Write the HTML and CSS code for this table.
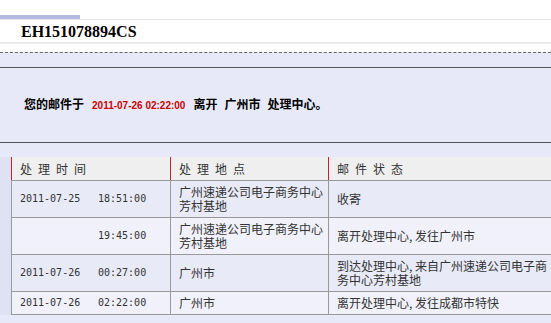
FILE: index.html
```html
<!DOCTYPE html>
<html lang="zh-CN">

<head>
    <meta charset="UTF-8">
    <meta name="viewport" content="width=device-width, initial-scale=1.0">
    <title>邮件跟踪查询</title>
    <link rel="stylesheet" href="styles.css">
</head>

<body>
    <div class="top-strip"></div>

    <div class="track-bar">EH151078894CS</div>

    <div class="result">
        <div class="notice">
            <p>您的邮件于<span class="notice-time">2011-07-26 02:22:00</span>离开<span class="notice-place">广州市</span>处理中心。</p>
        </div>

        <div class="table-wrap">
            <table class="trace">
                <colgroup>
                    <col class="col-time">
                    <col class="col-place">
                    <col class="col-state">
                </colgroup>
                <thead>
                    <tr>
                        <th>处理时间</th>
                        <th>处理地点</th>
                        <th>邮件状态</th>
                    </tr>
                </thead>
                <tbody>
                    <tr>
                        <td class="stamp"><span class="date">2011-07-25</span><span>18:51:00</span></td>
                        <td>广州速递公司电子商务中心芳村基地</td>
                        <td>收寄</td>
                    </tr>
                    <tr class="alt">
                        <td class="stamp"><span class="date"></span><span>19:45:00</span></td>
                        <td>广州速递公司电子商务中心芳村基地</td>
                        <td>离开处理中心, 发往广州市</td>
                    </tr>
                    <tr>
                        <td class="stamp"><span class="date">2011-07-26</span><span>00:27:00</span></td>
                        <td>广州市</td>
                        <td>到达处理中心, 来自广州速递公司电子商务中心芳村基地</td>
                    </tr>
                    <tr class="alt">
                        <td class="stamp"><span class="date">2011-07-26</span><span>02:22:00</span></td>
                        <td>广州市</td>
                        <td>离开处理中心, 发往成都市特快</td>
                    </tr>
                </tbody>
            </table>
        </div>
    </div>
</body>

</html>
```

FILE: styles.css
```css
html,
body {
    margin: 0;
    padding: 0;
    overflow: hidden;
}

body {
    font-family: "Noto Sans CJK SC", "DejaVu Sans", sans-serif;
    font-size: 12px;
    color: #333;
    background-color: #fff;
}

.top-strip {
    margin-top: 15px;
    width: 80px;
    height: 4px;
    background-color: #b5bae3;
}

.track-bar {
    height: 22px;
    line-height: 24px;
    padding-left: 21px;
    border-top: 1px solid #e4e4e4;
    border-bottom: 2px solid #ebebeb;
    font-family: "Liberation Serif", serif;
    font-size: 16px;
    font-weight: bold;
    color: #000;
}

.result {
    margin-top: 8px;
    border-top: 1px dashed #666;
    padding-top: 14px;
    background-color: #e7e9f8;
    height: 256px;
}

.notice {
    height: 74px;
    border-top: 1px solid #555;
    border-bottom: 1px solid #555;
    display: flex;
    align-items: center;
    padding-left: 24px;
}

.notice p {
    margin: 0;
    font-weight: bold;
    color: #000;
    line-height: 14px;
}

.notice-time {
    margin: 0 8px;
    font-family: "Liberation Sans", Arial, sans-serif;
    font-size: 10px;
    color: #c00;
}

.notice-place {
    margin: 0 7px;
}

.table-wrap {
    margin-top: 14px;
    padding-left: 11px;
    background-color: #dfe2f3;
}

.trace {
    border-collapse: collapse;
    table-layout: fixed;
    width: 547px;
}

.col-time {
    width: 159px;
}

.col-place {
    width: 158px;
}

.col-state {
    width: 230px;
}

.trace th {
    height: 23px;
    padding: 0 8px;
    text-align: left;
    font-weight: normal;
    letter-spacing: 6px;
    color: #333;
    background-color: #efefef;
    border-left: 1px solid #c0242c;
    border-bottom: 1px solid #999;
}

.trace td {
    padding: 4px 2px 4px 8px;
    line-height: 14px;
    vertical-align: middle;
    border: 1px solid #999;
    background-color: #e8eaf8;
}

.trace td:last-child {
    padding-right: 6px;
}

.trace tr.alt td {
    background-color: #f0f1fb;
}

.stamp {
    font-family: "DejaVu Sans Mono", monospace;
    font-size: 10px;
}

.date {
    display: inline-block;
    width: 78px;
}
```
